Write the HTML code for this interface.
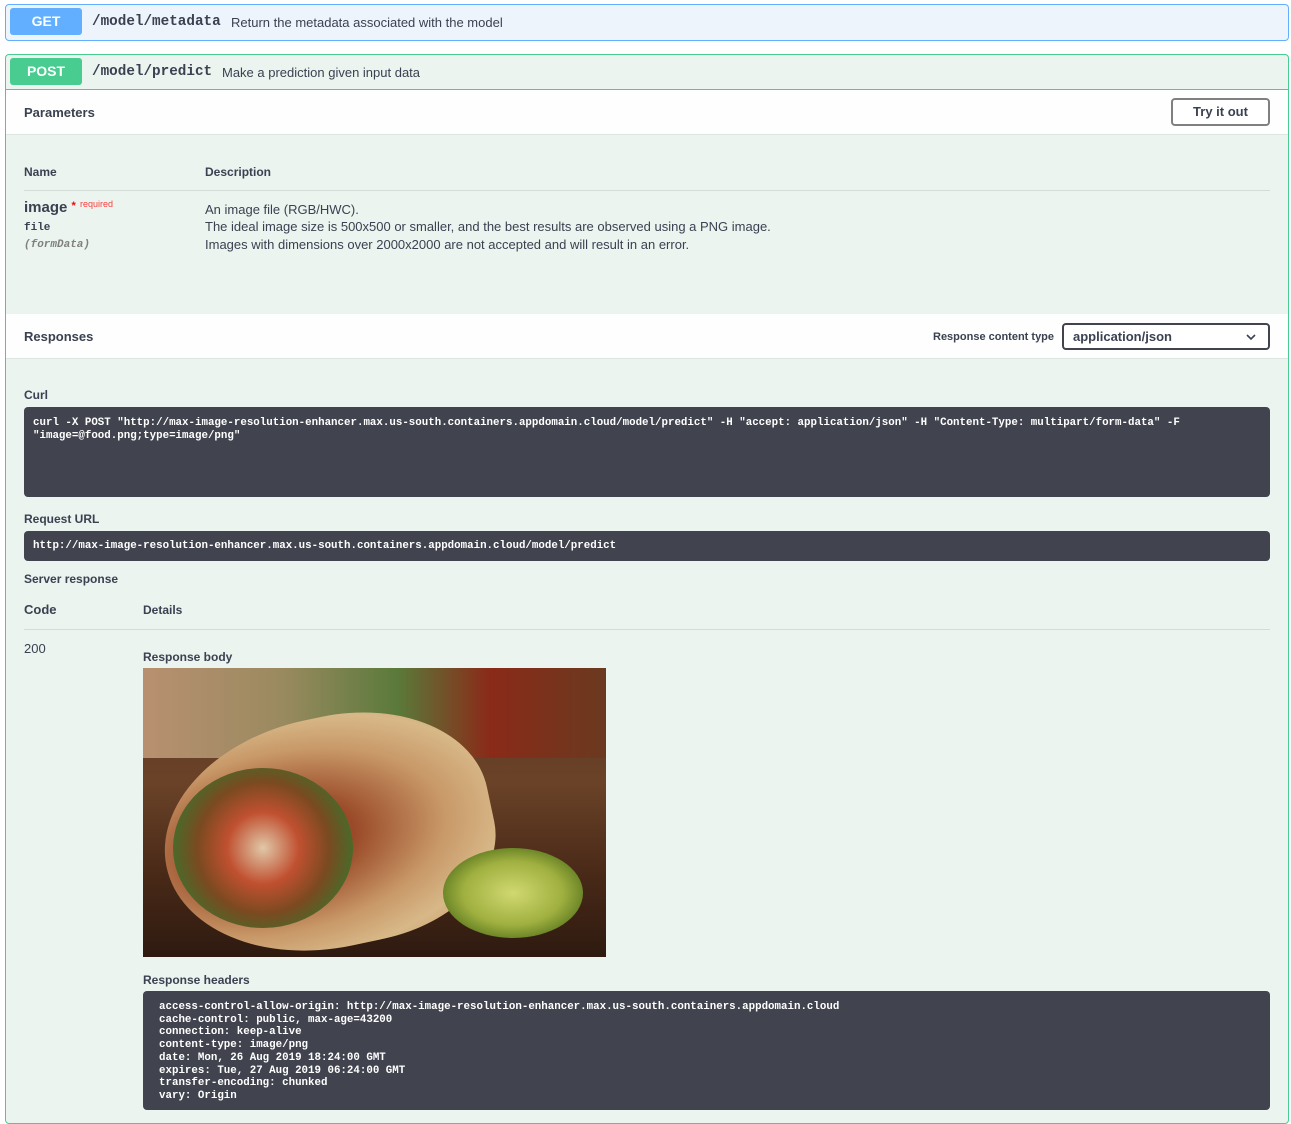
<!DOCTYPE html>
<html><head><style>
*{box-sizing:border-box;margin:0;padding:0}
body{width:1291px;height:1114px;background:#fff;font-family:"Liberation Sans",sans-serif;color:#3b4151;position:relative;overflow:hidden}
.abs{position:absolute}
.badge{position:absolute;width:72px;height:27px;border-radius:3px;color:#fff;font-weight:bold;font-size:14px;text-align:center;line-height:27px}
.path{font-family:"Liberation Mono",monospace;font-weight:bold;font-size:14.3px;color:#3b4151}
.desc{font-size:13px;color:#3b4151}
.lbl{font-weight:bold;font-size:12px;color:#3b4151}
.code{background:#41444e;border-radius:4px;color:#fff;font-family:"Liberation Mono",monospace;font-weight:bold;font-size:10.8px;line-height:12.8px;padding:9px;white-space:pre}
</style></head><body>
<div class="abs" style="left:5px;top:4px;width:1284px;height:37px;background:#eef4fc;border:1px solid #61affe;border-radius:4px"></div>
<div class="badge" style="left:10px;top:8px;background:#61affe">GET</div>
<div class="abs path" style="left:92px;top:14px">/model/metadata</div>
<div class="abs desc" style="left:231px;top:15px">Return the metadata associated with the model</div>

<div class="abs" style="left:5px;top:54px;width:1284px;height:1070px;background:#ebf4ee;border:1px solid #49cc90;border-radius:4px"></div>
<div class="abs" style="left:6px;top:89px;width:1282px;height:1px;background:#49cc90"></div>
<div class="badge" style="left:10px;top:58px;background:#49cc90">POST</div>
<div class="abs path" style="left:92px;top:64px">/model/predict</div>
<div class="abs desc" style="left:222px;top:65px">Make a prediction given input data</div>

<div class="abs" style="left:6px;top:90px;width:1282px;height:45px;background:#fdfefd;border-bottom:1px solid #dde6e0"></div>
<div class="abs" style="left:24px;top:105px;font-weight:bold;font-size:13px">Parameters</div>
<div class="abs" style="left:1171px;top:98px;width:99px;height:28px;border:2px solid #808080;border-radius:4px;background:#fff;font-weight:bold;font-size:13px;text-align:center;line-height:24px">Try it out</div>

<div class="abs lbl" style="left:24px;top:165px">Name</div>
<div class="abs lbl" style="left:205px;top:165px">Description</div>
<div class="abs" style="left:24px;top:190px;width:1246px;height:1px;background:#d3dcd6"></div>
<div class="abs" style="left:24px;top:199px;font-weight:bold;font-size:15px">image <span style="color:#f00;font-size:11px;vertical-align:3px">*</span> <span style="color:#f93e3e;font-size:9px;font-weight:normal;vertical-align:5px">required</span></div>
<div class="abs" style="left:24px;top:222px;font-family:'Liberation Mono',monospace;font-weight:bold;font-size:11px">file</div>
<div class="abs" style="left:24px;top:239px;font-family:'Liberation Mono',monospace;font-weight:bold;font-style:italic;font-size:11px;color:#808080">(formData)</div>
<div class="abs" style="left:205px;top:201px;font-size:13px;line-height:17.3px">An image file (RGB/HWC).<br>The ideal image size is 500x500 or smaller, and the best results are observed using a PNG image.<br>Images with dimensions over 2000x2000 are not accepted and will result in an error.</div>

<div class="abs" style="left:6px;top:314px;width:1282px;height:45px;background:#fdfefd;border-bottom:1px solid #dde6e0"></div>
<div class="abs" style="left:24px;top:329px;font-weight:bold;font-size:13px">Responses</div>
<div class="abs" style="left:933px;top:331px;font-weight:bold;font-size:11px">Response content type</div>
<div class="abs" style="left:1062px;top:323px;width:208px;height:27px;border:2px solid #41444e;border-radius:4px;background:#fff;font-weight:bold;font-size:13px;line-height:23px;padding-left:9px">application/json
<svg class="abs" style="right:12px;top:8px" width="10" height="8" viewBox="0 0 10 8"><path d="M1 2l4 4 4-4" fill="none" stroke="#3b4151" stroke-width="1.6"/></svg></div>

<div class="abs lbl" style="left:24px;top:388px">Curl</div>
<div class="abs code" style="left:24px;top:407px;width:1246px;height:90px;padding-top:10px">curl -X POST "http://max-image-resolution-enhancer.max.us-south.containers.appdomain.cloud/model/predict" -H "accept: application/json" -H "Content-Type: multipart/form-data" -F
"image=@food.png;type=image/png"</div>
<div class="abs lbl" style="left:24px;top:512px">Request URL</div>
<div class="abs code" style="left:24px;top:531px;width:1246px;height:30px;padding-top:9px">http://max-image-resolution-enhancer.max.us-south.containers.appdomain.cloud/model/predict</div>
<div class="abs lbl" style="left:24px;top:572px">Server response</div>
<div class="abs" style="left:24px;top:602px;font-weight:bold;font-size:13px">Code</div>
<div class="abs lbl" style="left:143px;top:603px">Details</div>
<div class="abs" style="left:24px;top:629px;width:1246px;height:1px;background:#d3dcd6"></div>
<div class="abs" style="left:24px;top:641px;font-size:13px">200</div>
<div class="abs lbl" style="left:143px;top:650px">Response body</div>
<div class="abs" style="left:143px;top:668px;width:463px;height:289px;overflow:hidden;background:linear-gradient(180deg,#5a3a22 0%,#6a4228 40%,#4a2a18 70%,#2e1a10 100%)">
 <div class="abs" style="left:0;top:0;width:463px;height:90px;background:linear-gradient(90deg,#b89070,#9a8a60 30%,#5a7a3a 55%,#8a2a18 75%,#6a3a20)"></div>
 <div class="abs" style="left:20px;top:50px;width:330px;height:230px;border-radius:50% 45% 40% 50%;background:radial-gradient(ellipse at 35% 50%,#a85a30 0%,#9a4a28 25%,#c89868 55%,#d8b888 75%,#c09060 100%);transform:rotate(-12deg)"></div>
 <div class="abs" style="left:30px;top:100px;width:180px;height:160px;border-radius:50%;background:radial-gradient(circle,#e0c8a8 0%,#c05030 30%,#7a4a20 55%,#4a6a2a 75%,transparent 80%)"></div>
 <div class="abs" style="left:300px;top:180px;width:140px;height:90px;border-radius:50%;background:radial-gradient(ellipse,#d0d870 0%,#a0b040 50%,#4a6a18 85%,transparent 90%)"></div>
</div>
<div class="abs lbl" style="left:143px;top:973px">Response headers</div>
<div class="abs code" style="left:143px;top:991px;width:1127px;height:119px;padding:10px 16px;line-height:12.7px">access-control-allow-origin: http://max-image-resolution-enhancer.max.us-south.containers.appdomain.cloud
cache-control: public, max-age=43200
connection: keep-alive
content-type: image/png
date: Mon, 26 Aug 2019 18:24:00 GMT
expires: Tue, 27 Aug 2019 06:24:00 GMT
transfer-encoding: chunked
vary: Origin</div>
</body></html>
